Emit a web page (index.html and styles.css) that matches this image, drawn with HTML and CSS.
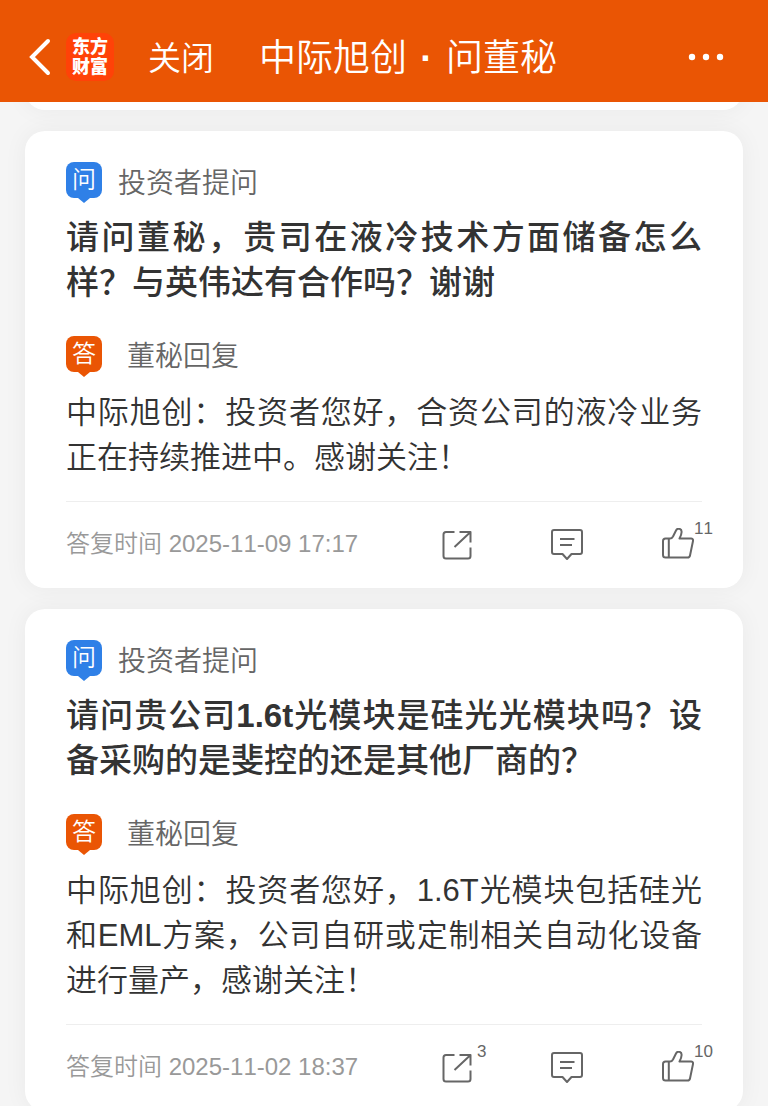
FILE: index.html
```html
<!DOCTYPE html>
<html lang="zh-CN">
<head>
    <meta charset="UTF-8">
    <meta name="viewport" content="width=device-width, initial-scale=1.0">
    <title>中际旭创 · 问董秘</title>
    <link rel="stylesheet" href="styles.css">
</head>
<body>
    <!-- Shared icons -->
    <svg class="sprite" aria-hidden="true">
        <symbol id="icon-share" viewBox="0 0 32 34">
            <path d="M14.500 4H6a2.500 2.500 0 0 0-2.500 2.500V28a2.500 2.500 0 0 0 2.500 2.500h22a2.500 2.500 0 0 0 2.500-2.500v-8.500M19.500 4h11v10.500M30 4.500L14.500 19"/>
        </symbol>
        <symbol id="icon-comment" viewBox="0 0 32 34">
            <path d="M3 2h26a2 2 0 0 1 2 2V24a2 2 0 0 1-2 2h-8.500l-4.500 5-4.500-5H3a2 2 0 0 1-2-2v-20a2 2 0 0 1 2-2zM9 11h14.500M9 17h12"/>
        </symbol>
        <symbol id="icon-like" viewBox="0 0 32 34">
            <path d="M3.500 10.500H8c1.500 0 2.300-.800 3-2L14 2.500c1.500-3 5.800-2 5.600 1.500-.100 2.500-1 4.500-2.100 6.500H29a2 2 0 0 1 2 2.500l-3 14.500a2.500 2.500 0 0 1-2.500 2H3.500A2.500 2.500 0 0 1 1 27V13a2.500 2.500 0 0 1 2.500-2.500zM6.800 10.500v19"/>
        </symbol>
    </svg>

    <header class="topbar">
        <button class="back" type="button" aria-label="返回">
            <svg width="22" height="38" viewBox="0 0 22 38"><path d="M19 3L3 19l16 16"/></svg>
        </button>
        <div class="logo">东方<br>财富</div>
        <button class="close" type="button">关闭</button>
        <h1 class="title">中际旭创<span class="dot"> · </span>问董秘</h1>
        <button class="more" type="button" aria-label="更多">
            <svg width="36" height="8" viewBox="0 0 36 8"><circle cx="4" cy="4" r="3.200"/><circle cx="18" cy="4" r="3.200"/><circle cx="32" cy="4" r="3.200"/></svg>
        </button>
    </header>

    <main class="list">
        <div class="card card-previous"></div>

        <article class="card">
            <div class="role role-ask"><span class="badge">问</span>投资者提问</div>
            <h2 class="question">请问董秘，贵司在液冷技术方面储备怎么样？与英伟达有合作吗？谢谢</h2>
            <div class="role role-answer"><span class="badge">答</span>董秘回复</div>
            <p class="answer">中际旭创：投资者您好，合资公司的液冷业务正在持续推进中。感谢关注！</p>
            <footer class="card-footer">
                <time datetime="2025-11-09T17:17">答复时间 2025-11-09 17:17</time>
                <div class="actions">
                    <button class="action share" type="button" aria-label="分享"><svg><use href="#icon-share"/></svg></button>
                    <button class="action" type="button" aria-label="评论"><svg><use href="#icon-comment"/></svg></button>
                    <button class="action like" type="button" aria-label="点赞"><svg><use href="#icon-like"/></svg><span class="count">11</span></button>
                </div>
            </footer>
        </article>

        <article class="card">
            <div class="role role-ask"><span class="badge">问</span>投资者提问</div>
            <h2 class="question">请问贵公司<b>1.6t</b>光模块是硅光光模块吗？设备采购的是斐控的还是其他厂商的？</h2>
            <div class="role role-answer"><span class="badge">答</span>董秘回复</div>
            <p class="answer">中际旭创：投资者您好，1.6T光模块包括硅光和EML方案，公司自研或定制相关自动化设备进行量产，感谢关注！</p>
            <footer class="card-footer">
                <time datetime="2025-11-02T18:37">答复时间 2025-11-02 18:37</time>
                <div class="actions">
                    <button class="action share" type="button" aria-label="分享"><svg><use href="#icon-share"/></svg><span class="count">3</span></button>
                    <button class="action" type="button" aria-label="评论"><svg><use href="#icon-comment"/></svg></button>
                    <button class="action like" type="button" aria-label="点赞"><svg><use href="#icon-like"/></svg><span class="count">10</span></button>
                </div>
            </footer>
        </article>
    </main>
</body>
</html>
```
FILE: styles.css
```css
* {
    box-sizing: border-box;
}

body {
    margin: 0;
    height: 100vh;
    display: flex;
    flex-direction: column;
    overflow: hidden;
    background-color: #f5f5f5;
    color: #333;
    font-family: "Liberation Sans", "Noto Sans CJK SC", sans-serif;
    font-weight: 350;
    font-kerning: none;
}

button {
    padding: 0;
    border: none;
    background: none;
    color: inherit;
    font: inherit;
    cursor: pointer;
}

svg {
    display: block;
    fill: none;
}

.sprite {
    position: absolute;
    width: 0;
    height: 0;
}

/* Top bar */
.topbar {
    flex: none;
    display: flex;
    align-items: center;
    padding: 33px 44px 21px 29px;
    background-color: #ea5504;
    color: #fff;
}

.back {
    margin-right: 15px;
}

.back svg {
    stroke: #fff;
    stroke-width: 4;
    stroke-linecap: round;
}

.logo {
    width: 48px;
    height: 48px;
    padding-top: 4px;
    border-radius: 10px;
    background-color: #ff4208;
    font-size: 18px;
    font-weight: 900;
    line-height: 20px;
    text-align: center;
}

.close {
    margin-left: 34px;
    padding-top: 4px;
    font-size: 33px;
    line-height: 44px;
}

.title {
    margin: 0 auto 0 45px;
    padding-top: 4px;
    font-size: 37px;
    font-weight: 350;
    line-height: 44px;
}

.dot {
    margin: 0 3px;
    font-weight: 700;
}

.more svg {
    fill: #fff;
}

/* Cards */
.list {
    flex: 1;
    padding: 0 25px;
    overflow: hidden auto;
    scrollbar-width: none;
}

.card {
    margin-bottom: 21px;
    padding: 31px 41px 0;
    border-radius: 20px;
    background-color: #fff;
    box-shadow: 0 0 24px rgba(0, 0, 0, 0.05);
}

.card-previous {
    height: 80px;
    margin-top: -72px;
}

.role {
    display: flex;
    gap: 16px;
    height: 40px;
    color: #666;
    font-size: 28px;
    line-height: 44px;
}

.role-answer {
    gap: 25px;
    line-height: 42px;
}

.badge {
    position: relative;
    width: 36px;
    height: 36px;
    border-radius: 8px;
    background-color: #2f80e7;
    color: #fff;
    font-size: 24px;
    line-height: 36px;
    text-align: center;
}

/* Little pointer under the badge */
.badge::after {
    content: "";
    position: absolute;
    top: 100%;
    left: 12px;
    border: 6px solid transparent;
    border-top: 5px solid #2f80e7;
    border-bottom: 0;
}

.role-answer .badge {
    background-color: #ea5504;
}

.role-answer .badge::after {
    border-top-color: #ea5504;
}

.question {
    margin: 13px 0 31px;
    font-size: 33px;
    font-weight: 500;
    line-height: 45px;
    text-align: justify;
}

.question b {
    font-weight: 700;
}

.answer {
    margin: 14px 0 21px;
    font-size: 31px;
    line-height: 45px;
    text-align: justify;
}

.card-footer {
    display: flex;
    align-items: center;
    justify-content: space-between;
    height: 87px;
    border-top: 1px solid #eee;
    color: #999;
    font-size: 24px;
}

.card-footer time {
    padding-bottom: 8px;
}

.actions {
    display: flex;
    gap: 79px;
    margin-right: 8px;
    color: #666;
}

.action {
    position: relative;
}

.action svg {
    width: 32px;
    height: 34px;
    overflow: visible;
    stroke: #666;
    stroke-width: 2;
    stroke-linejoin: round;
}

.count {
    position: absolute;
    top: -9px;
    left: 100%;
    font-size: 17px;
    line-height: 20px;
}

.share .count {
    margin-left: 5px;
}
```
